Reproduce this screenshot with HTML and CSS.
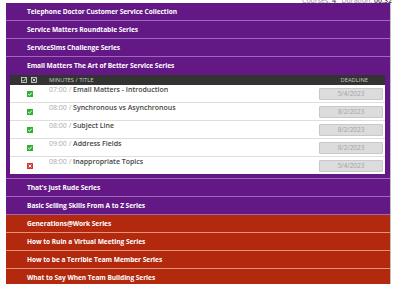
FILE: index.html
```html
<!DOCTYPE html>
<html>
<head>
<meta charset="utf-8">
<link rel="stylesheet" href="styles.css">
</head>
<body>
<div class="topbar"><span class="meta">Courses: <b>4</b>&nbsp;&nbsp; Duration: <b>00:32</b></span></div>
<div class="list">
  <div class="series purple">Telephone Doctor Customer Service Collection</div>
  <div class="series purple">Service Matters Roundtable Series</div>
  <div class="series purple">ServiceSims Challenge Series</div>
  <div class="series purple open">Email Matters The Art of Better Service Series</div>
  <div class="panel">
    <div class="thead">
      <div class="hicons">
        <svg width="6" height="6" viewBox="0 0 6 6"><rect x="0.5" y="0.5" width="5" height="5" fill="none" stroke="#ddd" stroke-width="0.8"/><path d="M1.3 3.1 L2.5 4.3 L4.8 1.4" fill="none" stroke="#ddd" stroke-width="0.9"/></svg>
        <svg width="6" height="6" viewBox="0 0 6 6"><rect x="0.5" y="0.5" width="5" height="5" fill="none" stroke="#ddd" stroke-width="0.8"/><path d="M1.6 1.6 L4.4 4.4 M4.4 1.6 L1.6 4.4" fill="none" stroke="#ddd" stroke-width="0.9"/></svg>
      </div>
      <div class="hcol">MINUTES / TITLE</div>
      <div class="hdead">DEADLINE</div>
    </div>
    <div class="tbody">
      <div class="lesson">
        <span class="ico ok"><svg width="6" height="6" viewBox="0 0 6 6"><path d="M1.2 3.1 L2.5 4.3 L4.8 1.6" fill="none" stroke="#fff" stroke-width="1"/></svg></span>
        <div class="ttl"><span class="min">07:00 / </span>Email Matters - Introduction</div>
        <div class="date">5/4/2023</div>
      </div>
      <div class="lesson">
        <span class="ico ok"><svg width="6" height="6" viewBox="0 0 6 6"><path d="M1.2 3.1 L2.5 4.3 L4.8 1.6" fill="none" stroke="#fff" stroke-width="1"/></svg></span>
        <div class="ttl"><span class="min">08:00 / </span>Synchronous vs Asynchronous</div>
        <div class="date">8/2/2023</div>
      </div>
      <div class="lesson">
        <span class="ico ok"><svg width="6" height="6" viewBox="0 0 6 6"><path d="M1.2 3.1 L2.5 4.3 L4.8 1.6" fill="none" stroke="#fff" stroke-width="1"/></svg></span>
        <div class="ttl"><span class="min">08:00 / </span>Subject Line</div>
        <div class="date">8/2/2023</div>
      </div>
      <div class="lesson">
        <span class="ico ok"><svg width="6" height="6" viewBox="0 0 6 6"><path d="M1.2 3.1 L2.5 4.3 L4.8 1.6" fill="none" stroke="#fff" stroke-width="1"/></svg></span>
        <div class="ttl"><span class="min">09:00 / </span>Address Fields</div>
        <div class="date">8/2/2023</div>
      </div>
      <div class="lesson">
        <span class="ico no"><svg width="6" height="6" viewBox="0 0 6 6"><path d="M1.6 1.6 L4.4 4.4 M4.4 1.6 L1.6 4.4" fill="none" stroke="#fff" stroke-width="1"/></svg></span>
        <div class="ttl"><span class="min">08:00 / </span>Inappropriate Topics</div>
        <div class="date">5/4/2023</div>
      </div>
    </div>
  </div>
  <div class="series purple">That's Just Rude Series</div>
  <div class="series purple">Basic Selling Skills From A to Z Series</div>
  <div class="series red">Generations@Work Series</div>
  <div class="series red">How to Ruin a Virtual Meeting Series</div>
  <div class="series red">How to be a Terrible Team Member Series</div>
  <div class="series red">What to Say When Team Building Series</div>
</div>
</body>
</html>
```
FILE: styles.css
```css
html, body {
  margin: 0;
  padding: 0;
  background: #fff;
  font-family: "Open Sans", "Liberation Sans", sans-serif;
  overflow: hidden;
}
.topbar {
  height: 3px;
  width: 392px;
  display: flex;
  justify-content: flex-end;
  align-items: flex-end;
  overflow: hidden;
}
.meta {
  font-size: 7px;
  line-height: 7px;
  color: #888;
  margin-bottom: -1px;
}
.meta b {
  color: #444;
  font-weight: 600;
}
.list {
  margin-left: 6px;
  width: 384px;
  box-shadow: 1px 0 0 rgba(0,0,0,0.25);
}
.series {
  height: 17px;
  line-height: 17px;
  padding-left: 21px;
  font-size: 6.6px;
  font-weight: 700;
  color: #fff;
  letter-spacing: -0.05px;
}
.purple {
  background: #641886;
  border-bottom: 1px solid #9d68bb;
}
.red {
  background: #b2290e;
  border-bottom: 1px solid #e8927a;
}
.series.open {
  height: 18px;
  line-height: 18px;
  border-bottom: none;
}
.panel {
  background: #641886;
  padding: 0 5px 4px 4px;
  border-bottom: 1px solid #9d68bb;
}
.thead {
  height: 10px;
  background: #333331;
  display: flex;
  align-items: center;
  font-size: 5.8px;
  color: #c9c9c9;
}
.hicons {
  width: 39px;
  display: flex;
  gap: 4px;
  padding-left: 11px;
  box-sizing: border-box;
}
.hicons svg { display: block; }
.hcol {
  flex: 1;
}
.hdead {
  width: 64px;
  text-align: right;
  padding-right: 17px;
  box-sizing: border-box;
}
.tbody {
  background: #fff;
}
.lesson {
  height: 17px;
  border-bottom: 1px solid #dedede;
  display: flex;
  align-items: flex-start;
}
.lesson:last-child {
  border-bottom: none;
}
.ico {
  width: 6px;
  height: 6px;
  margin: 6px 16px 0 17px;
  display: block;
}
.ico svg { display: block; }
.ok { background: #2fae2f; }
.no { background: #d33a2e; }
.ttl {
  flex: 1;
  font-size: 7px;
  line-height: 8px;
  padding-top: 0.5px;
  color: #444;
  font-weight: 600;
}
.min {
  color: #aaa;
  font-weight: 400;
}
.date {
  width: 62px;
  height: 10px;
  margin: 3px 2px 0 0;
  background: #dcdcdc;
  border: 1px solid #c8c8c8;
  border-radius: 1px;
  font-size: 6.4px;
  line-height: 10px;
  text-align: center;
  color: #a3a3a3;
}
```
